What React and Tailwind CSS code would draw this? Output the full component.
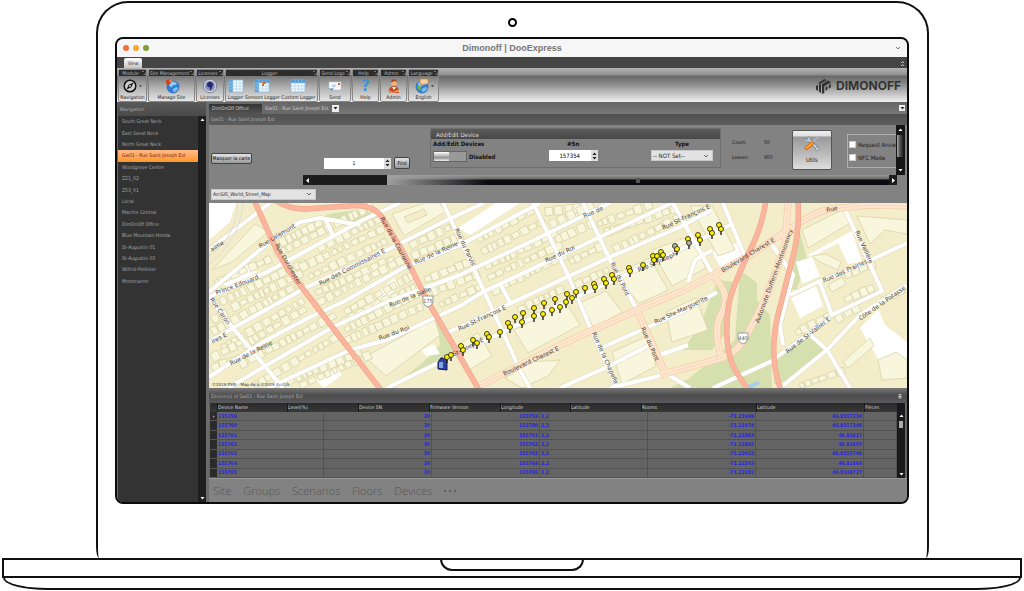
import { clsx } from "clsx";

const SITES = [
  "South Great Neck",
  "East Great Neck",
  "North Great Neck",
  "Gw01 - Rue Saint Joseph Est",
  "Woodgrove Centre",
  "Z21_02",
  "Z53_01",
  "Local",
  "Marche Central",
  "DimOnOff Office",
  "Blue Mountain Honda",
  "St-Augustin 01",
  "St-Augustin 03",
  "Wilfrid-Pelletier",
  "Montmartre",
];

const DEVICES = [
  ["155759", "-71.21999", "46.8157234"],
  ["155760", "-71.21974", "46.8157348"],
  ["155761", "-71.21863", "46.81617"],
  ["155762", "-71.21892", "46.81607"],
  ["155763", "-71.22022", "46.8155746"],
  ["155764", "-71.22243", "46.81464"],
  ["155765", "-71.22282", "46.8148727"],
];

const Arrow = ({ dir = "down", className = "fill-white" }) => {
  const shapes = {
    up: "M0.5 4L2.5 1.5L4.5 4Z",
    down: "M0.5 1L2.5 3.5L4.5 1Z",
    left: "M4 0L1 2.5L4 5Z",
    right: "M1 0L4 2.5L1 5Z",
  };
  return (
    <svg viewBox="0 0 5 5" className={clsx("size-[5px] shrink-0", className)}>
      <path d={shapes[dir]} />
    </svg>
  );
};

const Chevron = () => (
  <svg
    viewBox="0 0 6 6"
    className="pointer-events-none absolute top-1/2 right-1 size-[6px] -translate-y-1/2 fill-none stroke-[#666]"
  >
    <path d="M1 2L3 4L5 2" />
  </svg>
);

/* ---------- ribbon icons ---------- */

const CompassIcon = () => (
  <svg viewBox="0 0 22 16" className="h-4 w-[22px]">
    <circle cx="9" cy="8" r="5.8" fill="#ccc" stroke="#111" strokeWidth="1.5" />
    <path d="M12.5 4.5L10.3 9.3L5.5 11.5L7.7 6.7Z" fill="#111" />
    <circle cx="9" cy="8" r="1" fill="#ccc" />
    <path d="M18 7.5h3l-1.5 1.5z" fill="#222" />
  </svg>
);

const GlobeShape = () => (
  <>
    <circle cx="9" cy="9" r="6" fill="#2f7fd8" stroke="#1c58a8" strokeWidth=".6" />
    <path d="M5 5C8 2 12 4 13 6C11 8 9 6 8 9C6 10 5 7 5 5Z" fill="#8cc9f5" />
    <path d="M9 11C11 9 14 9 14.5 10C13 13 11 14.5 9 14Z" fill="#7dbcf0" />
  </>
);

const ManageSiteIcon = () => (
  <svg viewBox="0 0 16 16" className="size-4">
    <GlobeShape />
    <path d="M2 2L6 1.5L7.5 4L5 7L2.5 6Z" fill="#c8421c" />
    <path d="M4.5 3L7 2L8 4.5Z" fill="#f09a50" />
  </svg>
);

const LicensesIcon = () => (
  <svg viewBox="0 0 16 16" className="size-4">
    <circle cx="8" cy="8" r="6.8" fill="#c9ccda" stroke="#6f7794" strokeWidth=".8" />
    <circle cx="8" cy="8" r="5" fill="#8790bd" />
    <path d="M5 7C5 4 8 3 10 4.5C12 6 11 8 10 9C10 11 9 12 8 12L7.5 9L5.5 9Z" fill="#252a6e" />
  </svg>
);

const TableIcon = ({ accent }) => (
  <svg viewBox="0 0 16 14" className="h-[14px] w-4">
    <rect x="1" y="1" width="14" height="12" fill="#f4f9fd" stroke="#86b6dc" strokeWidth=".7" />
    {accent !== "top" && <rect x="1" y="1" width="4" height="12" fill="#5fa8de" />}
    {accent !== "side" && <rect x="1" y="1" width="14" height="3" fill="#4e9ad6" />}
    <path d="M1 4h14M1 7h14M1 10h14M5 1v12M8.500 1v12M12 1v12" stroke="#a7cde9" strokeWidth=".6" />
    {accent === "sensor" && <path d="M8.5 3h3v2H10v2H8z" fill="#e8641c" />}
  </svg>
);

const SendIcon = () => (
  <svg viewBox="0 0 16 14" className="h-[14px] w-4">
    <rect x="2" y="3" width="12" height="8" fill="#fbfbfb" stroke="#b8bcc4" strokeWidth=".6" />
    <rect x="11" y="4" width="2" height="2" fill="#e2552c" />
    <path d="M5 6h4M5 7.5h3" stroke="#7da0c8" strokeWidth=".7" />
    <path d="M1 9.500h6l-2 2z" fill="#3f8edb" />
  </svg>
);

const AdminIcon = () => (
  <svg viewBox="0 0 16 16" className="size-4">
    <path d="M3 15C2 10 5 8 8 8C11 8 13 10 13 15Z" fill="#c04a24" />
    <path d="M6 9L8 12L10 9Z" fill="#fff" />
    <circle cx="8" cy="5" r="3" fill="#f2b27c" />
    <path d="M5 4.5C5 0 11 0 11 4.5L9 3Z" fill="#a8441c" />
    <path d="M2 12L7 14L14 11L13 14L4 15Z" fill="#e8a070" />
  </svg>
);

const LanguageIcon = () => (
  <svg viewBox="0 0 22 16" className="h-4 w-[22px]">
    <GlobeShape />
    <path d="M4 8C7 7 9 9 8 12C6 13 4 11 4 8Z" fill="#5cb648" />
    <path d="M7 1h8v5h-4l-2 2v-2H7z" fill="#f6d2a0" stroke="#c87830" strokeWidth=".7" />
    <path d="M18 7.5h3l-1.5 1.5z" fill="#222" />
  </svg>
);

const UtilsIcon = () => (
  <svg viewBox="0 0 18 16" className="h-4 w-[18px]">
    <path d="M5 4L14 13" stroke="#6f7f90" strokeWidth="3" strokeLinecap="round" />
    <path d="M5 4L14 13" stroke="#dfe7ee" strokeWidth="1.6" strokeLinecap="round" />
    <path d="M2 3.5L4.5 5L5.5 1.5C8 2 8 6 5 7C3 7 2 5 2 3.5Z" fill="#c8d4df" stroke="#6f7f90" strokeWidth=".6" />
    <path d="M16 14L14 11.5L12 14.5C13.5 16 16 16 16 14Z" fill="#c8d4df" stroke="#6f7f90" strokeWidth=".6" />
    <path d="M9 8L14 3L16 1.5" stroke="#a5b4c2" strokeWidth="1.8" fill="none" />
    <path d="M3.5 13L9 8.5" stroke="#c05a10" strokeWidth="4" strokeLinecap="round" />
    <path d="M3.5 13L9 8.5" stroke="#ff9c30" strokeWidth="2.6" strokeLinecap="round" />
  </svg>
);

const RIBBON = [
  { title: "Module", width: "w-[29px]", items: [["Navigation", <CompassIcon />]] },
  { title: "Site Management", width: "w-[47px]", items: [["Manage Site", <ManageSiteIcon />]] },
  { title: "Licenses", width: "w-[28px]", items: [["Licenses", <LicensesIcon />]] },
  {
    title: "Logger",
    width: "w-[93px]",
    items: [
      ["Logger", <TableIcon accent="side" />],
      ["Sensors Logger", <TableIcon accent="sensor" />],
      ["Custom Logger", <TableIcon accent="top" />],
    ],
  },
  { title: "Send Logs", width: "w-[32px]", items: [["Send", <SendIcon />]] },
  {
    title: "Help",
    width: "w-[27px]",
    items: [["Help", <span className="text-[16px] leading-4 font-bold text-[#3f92d8]">?</span>]],
  },
  { title: "Admin", width: "w-[27px]", items: [["Admin", <AdminIcon />]] },
  { title: "Language", width: "w-[31px]", items: [["English", <LanguageIcon />]] },
];

const Ribbon = () => (
  <div className="flex h-[34px] items-start justify-between bg-[linear-gradient(#b4b4b4_0px,#8e8e8e_7px,#666_8px,#8a8a8a_16px,#ececec_33px)] pl-px">
    <div className="flex gap-px pt-px">
      {RIBBON.map((group) => (
        <section
          key={group.title}
          className={clsx(
            "flex h-[33px] shrink-0 flex-col rounded-[2px] border border-[#888] bg-[linear-gradient(#777_6px,#aaa_16px,#e6e6e6)]",
            group.width,
          )}
        >
          <h2 className="flex h-[6px] items-center justify-between overflow-hidden bg-[#2c2c2c] leading-[6px] whitespace-nowrap text-[#b8b8b8]">
            <span className="flex-1 text-center">{group.title}</span>
            <svg viewBox="0 0 4 4" className="size-1 shrink-0 fill-none stroke-[#aaa] stroke-[0.6]">
              <path d="M0 .5h2M3.500 1.500v2h-2" />
            </svg>
          </h2>
          <div className="flex flex-1 justify-evenly">
            {group.items.map(([label, icon]) => (
              <button
                key={label}
                type="button"
                className="flex flex-col items-center justify-between whitespace-nowrap text-[#1c1c1c]"
              >
                <span className="flex h-[18px] items-center pt-px">{icon}</span>
                <span className="h-[7px]">{label}</span>
              </button>
            ))}
          </div>
        </section>
      ))}
    </div>
    <div className="flex items-center gap-[5px] pt-[10px] pr-[6px] text-[#333]">
      <svg viewBox="0 0 15 16" className="h-4 w-[15px] fill-[#333]">
        <path d="M0 8L2 6.8V13L0 11.5Z" />
        <path d="M3 6.5L5 5.5V15L3 13.8Z" />
        <path d="M2 5L8.500 1L10.500 2.200L4 6Z" />
        <path d="M6 6L12 2.500L14.500 4V5.500L13 5.500L8.300 8.200V15L6 16Z" />
        <path d="M9.500 9.200L11.500 8V11.500L9.500 12.700Z" />
        <path d="M12.800 7L14.800 6V9.500L12.800 10.800Z" />
      </svg>
      <span className="font-[Inter,sans-serif] text-[12px] leading-4 font-bold">DIMONOFF</span>
    </div>
  </div>
);

const Sidebar = () => (
  <aside className="flex w-[92px] shrink-0 flex-col border-l border-[#666] bg-[#6c6c6c] pr-[3px]">
    <h2 className="flex h-[14px] items-center bg-gradient-to-b from-[#5a5a5a] to-[#4a4a4a] pl-[2px] text-[#aaa]">
      Navigation
    </h2>
    <div className="flex flex-1 bg-[#333]">
      <ul className="flex h-[171px] flex-1 flex-col">
        {SITES.map((site, i) => (
          <li key={site} className="flex flex-1">
            <a
              href="#site"
              className={clsx(
                "flex flex-1 items-center pl-1 whitespace-nowrap",
                i === 3
                  ? "bg-gradient-to-b from-[#ffb98a] to-[#ff9718] text-[#7c1c08]"
                  : "text-[#a4a4a4]",
              )}
            >
              {site}
            </a>
          </li>
        ))}
      </ul>
      <div className="flex w-2 flex-col items-center justify-between bg-[#1e1e1e] py-px">
        <Arrow dir="up" />
        <Arrow />
      </div>
    </div>
  </aside>
);

/* ---------- map ---------- */

const STREETS = [
  "M209 292L272 240L300 222L320 218L360 225",
  "M209 297L267 272L313 247L363 220L400 203",
  "M209 342L233 328L307 287L387 250L447 220L484 203",
  "M209 377L263 342L310 317L343 302L403 268L460 245L540 203",
  "M228 388L267 365L333 327L387 302L460 275L530 242L610 203",
  "M268 388L350 350L387 340L460 306L483 292L600 237L672 203",
  "M447 333L507 305L610 257L680 227L712 210",
  "M387 388L440 362L507 330L577 297L673 253L732 224",
  "M209 298L233 328L283 388",
  "M209 250L240 226L270 203",
  "M443 203L473 267L520 370L530 388",
  "M533 203L567 273L590 327L617 388",
  "M583 203L610 260L637 310",
  "M673 203L712 273",
  "M723 203L745 257",
  "M603 347L680 313L717 292",
  "M560 388L607 367L650 345",
  "M610 388L667 374L690 388",
  "M325 218L334 238",
  "M500 284L511 304",
  "M688 282L695 260L712 250",
  "M790 295L820 281L860 265L907 243",
  "M843 205L882 291L832 315L820 283",
  "M713 388L770 362L830 318",
  "M780 388L827 350L860 315L907 285",
  "M807 332L827 350L850 388",
  "M770 242L793 275L780 325L783 345",
  "M660 355L688 345",
];

const PARKS = [
  "M740 270L757 283V300L770 315L772 388H670L690 378L735 340Z",
  "M718 280L735 282L728 330L712 350H683L700 325Z",
  "M798 225L808 262L796 290L788 288Z",
  "M806 336L826 348L790 380L774 384L776 356Z",
  "M320 218Q340 208 374 213L352 222Z",
  "M436 318L450 345L462 352L395 384L420 365L440 345Z",
];

const LOTS = [
  "M209 203H236L230 222L209 240Z",
  "M222 285L248 264L258 272L230 286Z",
  "M458 228L496 203H520L470 235Z",
  "M378 292L394 278L398 285L386 302L380 300Z",
  "M362 308L372 300L378 306L366 313Z",
  "M712 252L740 242L744 262L722 270Z",
  "M808 255L852 231L862 262L848 264L838 243L812 257Z",
  "M796 262L812 257L820 276L802 284Z",
  "M791 298L816 286L823 306L800 318Z",
  "M860 328L878 309L885 325L907 342V358L880 362L868 342Z",
  "M316 380L338 368L342 375L324 388Z",
  "M422 350L434 344L440 354L426 356Z",
];

const BIG_BUILDINGS = [
  "M212 270L255 224L268 232L232 262Z",
  "M392 214L425 203H440L445 212L404 236Z",
  "M365 357L412 331L434 318L440 335L386 376Z",
  "M452 348L478 333L492 356L466 372Z",
  "M514 330L566 303L580 325L528 353Z",
  "M580 303L606 291L622 312L594 328Z",
  "M612 275L650 258L668 290L640 303Z",
  "M652 250L690 236L706 268L672 286Z",
  "M612 352L648 336L656 366L622 384Z",
  "M666 312L696 298L708 330L672 342Z",
  "M802 230L842 210L852 222L808 248Z",
  "M857 216L907 220V234L885 230L870 244Z",
  "M812 256L826 254L841 262L838 270L820 262Z",
  "M843 362L870 338L874 346L848 368Z",
  "M878 360L896 352L907 360V378L882 380Z",
  "M828 285L842 277L846 284L832 292Z",
  "M505 378L532 362L560 360L548 376L522 388Z",
  "M690 206L712 206L735 250L718 256Z",
];

// lines along which rows of houses are laid: x1, y1, x2, y2
const HOUSE_ROWS = [
  [215, 283, 268, 260],
  [275, 255, 372, 206],
  [280, 243, 318, 224],
  [212, 306, 305, 262],
  [232, 308, 300, 274],
  [300, 268, 385, 228],
  [318, 249, 378, 220],
  [212, 320, 226, 313],
  [212, 332, 300, 284],
  [309, 277, 382, 243],
  [222, 348, 304, 300],
  [242, 346, 302, 311],
  [316, 293, 395, 258],
  [318, 303, 402, 260],
  [212, 358, 240, 343],
  [212, 368, 262, 350],
  [240, 365, 332, 317],
  [345, 312, 410, 277],
  [342, 321, 412, 288],
  [250, 388, 335, 338],
  [345, 330, 420, 292],
  [345, 341, 425, 305],
  [280, 385, 355, 355],
  [300, 386, 365, 357],
  [410, 246, 452, 226],
  [412, 256, 462, 236],
  [425, 280, 470, 262],
  [432, 292, 480, 274],
  [440, 305, 482, 286],
  [478, 240, 530, 212],
  [482, 252, 542, 222],
  [485, 267, 552, 236],
  [488, 278, 558, 246],
  [492, 292, 560, 258],
  [545, 212, 578, 208],
  [550, 225, 590, 206],
  [556, 240, 595, 222],
  [570, 262, 600, 247],
  [598, 224, 650, 205],
  [605, 233, 672, 210],
  [614, 250, 680, 217],
  [518, 310, 560, 290],
  [575, 285, 606, 271],
  [845, 300, 875, 287],
  [836, 320, 858, 308],
  [845, 275, 872, 265],
  [796, 333, 825, 318],
  [800, 386, 840, 372],
  [882, 300, 905, 290],
];

const houses = HOUSE_ROWS.flatMap(([x1, y1, x2, y2], row) => {
  const length = Math.hypot(x2 - x1, y2 - y1);
  const angle = (Math.atan2(y2 - y1, x2 - x1) * 180) / Math.PI;
  const list = [];
  let at = 0;
  for (let i = 0; at < length; i++) {
    const r = Math.abs(Math.sin(row * 12.9 + i * 78.2));
    const w = 4 + r * 4;
    const h = 5 + ((r * 37) % 1) * 4;
    list.push({
      x: x1 + ((x2 - x1) * at) / length,
      y: y1 + ((y2 - y1) * at) / length,
      w,
      h,
      angle,
    });
    at += w + ((r * 91) % 1) * 3;
  }
  return list;
});

const PEACH = [
  "M477 387L560 345L637 310L680 292L713 275L750 255L793 227Q810 214 830 209L870 205L907 206",
  "M788 203L785 245L767 295L747 335Q738 352 722 358L660 375",
  "M713 275Q732 296 722 312Q712 330 722 358",
  "M637 310L667 377",
];

const SALMON = [
  "M254 200L272 240Q284 266 300 285L333 328L381 390",
  "M275 200Q288 209 306 209L347 206Q374 203 383 219L403 252L427 300L458 353L479 390",
  "M766 200Q763 222 754 242Q735 280 729 302Q722 350 737 373L748 390",
  "M798 200Q800 232 792 260L778 315Q768 356 781 390",
];

// text, centre x, centre y, rotation
const STREET_NAMES = [
  ["Rue Lalemont", 277, 236, -31],
  ["Rue Dorchester", 288, 264, 60],
  ["aime", 217, 246, -33],
  ["ires E", 219, 338, -27],
  ["Prince Edouard", 237, 285, -21],
  ["Rue Caron", 220, 311, 55],
  ["Rue des Commissaires E", 352, 267, -27],
  ["Rue de la Couronne", 396, 243, 61],
  ["Rue de la Reine", 436, 253, -24],
  ["Rue de la Reine", 251, 353, -27],
  ["Rue de la Salle", 410, 297, -22],
  ["Rue du Roi", 394, 333, -20],
  ["Rue du Parvis", 465, 247, 65],
  ["Rue du Roi", 560, 254, -25],
  ["Rue St-François E", 482, 318, -25],
  ["Rue St-François E", 686, 217, -25],
  ["Rue St-Joseph E", 462, 350, -26],
  ["Rue St-Joseph", 657, 262, -24],
  ["Boulevard Charest E", 531, 361, -25],
  ["Boulevard Charest E", 748, 255, -31],
  ["Rue du Pont", 620, 279, 64],
  ["Rue du Pont", 650, 344, 66],
  ["Rue de la Chapelle", 605, 358, 66],
  ["Rue Ste-Marguerite", 681, 310, -25],
  ["Autoroute Dufferin-Montmorency", 774, 276, -70],
  ["Rue Vallière", 864, 247, 66],
  ["Rue des Prairies", 845, 271, -24],
  ["Rue de St-Vallier E", 808, 335, -38],
  ["Côte de la Potasse", 882, 303, -35],
  ["Rue de", 593, 212, -24],
  ["Rue", 832, 209, -12],
];

const PINS = [
  [447, 357], [451, 355], [461, 346], [463, 350], [473, 340], [477, 343], [487, 334],
  [489, 337], [500, 332], [508, 323], [510, 327], [515, 317], [523, 313], [522, 322],
  [534, 308], [534, 316], [544, 303], [543, 314], [555, 299], [552, 310], [560, 307],
  [567, 294], [566, 302], [572, 298], [576, 292], [585, 288], [594, 284], [595, 287],
  [604, 279], [606, 283], [612, 275], [614, 279], [629, 268], [630, 271], [643, 265],
  [653, 256], [654, 260], [657, 256], [661, 252], [663, 255], [675, 246, "off"], [677, 249],
  [688, 239], [689, 243, "off"], [698, 235], [700, 240], [710, 229], [712, 233],
  [719, 225], [721, 229],
];

const Shield = ({ x, y, label }) => (
  <g transform={`translate(${x} ${y})`}>
    <path d="M-5 -5H5V1Q4 5 0 6Q-4 5 -5 1Z" fill="#fff" stroke="#999" />
    <text y="2" textAnchor="middle" fontSize="5" fill="#555">
      {label}
    </text>
  </g>
);

const StreetMap = () => (
  <svg
    viewBox="209 203 698 185"
    preserveAspectRatio="xMidYMid slice"
    className="block h-[185px] w-full bg-[#f3edc9] font-['DejaVu_Sans',sans-serif]"
    role="img"
    aria-label="Street map with device pins"
  >
    <g fill="#d6dfae">
      {PARKS.map((d) => <path key={d} d={d} />)}
    </g>
    <path d="M748 385L758 381L760 384L752 388H747Z" fill="#a9cdf0" />
    <g fill="#fff">
      {LOTS.map((d) => <path key={d} d={d} />)}
    </g>
    <g fill="#f8f7de" stroke="#d6cfa4" strokeWidth=".7">
      {BIG_BUILDINGS.map((d) => <path key={d} d={d} />)}
      {houses.map((b, i) => (
        <rect
          key={i}
          x={b.x}
          y={b.y - b.h / 2}
          width={b.w}
          height={b.h}
          transform={`rotate(${b.angle} ${b.x} ${b.y})`}
        />
      ))}
      <path d="M404 217L424 209L427 215L408 223Z" fill="#f3edc9" />
    </g>
    <g fill="none" strokeLinejoin="round">
      {STREETS.map((d) => <path key={d} d={d} stroke="#ded9c0" strokeWidth="5" />)}
      {STREETS.map((d) => <path key={d} d={d} stroke="#fff" strokeWidth="4" />)}
      <path d="M209 264Q240 240 243 203M209 256Q236 238 238 203" stroke="#ddd" />
      {PEACH.map((d) => <path key={d} d={d} stroke="#f7cda8" strokeWidth="7" />)}
      {PEACH.map((d) => <path key={d} d={d} stroke="#fde6cf" strokeWidth="5.5" />)}
      {PEACH.map((d) => <path key={d} d={d} stroke="#f9d3b2" strokeWidth=".7" />)}
      {SALMON.map((d) => <path key={d} d={d} stroke="#eea088" strokeWidth="5.5" />)}
      {SALMON.map((d) => <path key={d} d={d} stroke="#fbb59d" strokeWidth="4.5" />)}
    </g>
    <g fill="#444" fontSize="6" textAnchor="middle">
      {STREET_NAMES.map(([name, x, y, angle]) => (
        <text key={`${name}${x}`} x={x} y={y + 2} transform={`rotate(${angle} ${x} ${y})`}>
          {name}
        </text>
      ))}
    </g>
    <Shield x={428} y={301} label="175" />
    <Shield x={743} y={338} label="440" />
    <g>
      <path d="M438 362L441 358L447 360L447 370L438 369Z" fill="#2c3fa8" stroke="#161c50" />
      <path d="M439 362h4v6h-4z" fill="#7fa8dc" />
    </g>
    {PINS.map(([x, y, state]) => (
      <g key={`${x}-${y}`}>
        <path d={`M${x} ${y}v6`} stroke="#222" strokeWidth="1.4" />
        <circle
          cx={x}
          cy={y}
          r="2.5"
          fill={state ? "#b4b4b4" : "#fff200"}
          stroke="#2a2a10"
          strokeWidth=".9"
        />
      </g>
    ))}
    <text x="212" y="386" fontSize="4" fill="#234">
      ©2019 ESRI - Map data ©2019 <tspan fill="#1a5fc0">ArcGIS</tspan>
    </text>
  </svg>
);

/* ---------- device controls ---------- */

const Spinner = ({ label, value, className }) => (
  <div className={clsx("flex h-[11px] bg-white", className)}>
    <input
      aria-label={label}
      defaultValue={value}
      className="w-full min-w-0 flex-1 bg-white text-center text-black outline-none"
    />
    <div className="flex w-[7px] flex-col items-center justify-center bg-[#ddd]">
      <Arrow dir="up" className="fill-[#222]" />
      <Arrow className="fill-[#222]" />
    </div>
  </div>
);

const Picker = ({ label, value, className }) => (
  <div className={clsx("relative", className)}>
    <select
      aria-label={label}
      className="block h-[11px] w-full appearance-none border border-[#c8c8c8] bg-[#e2e2e2] pl-px text-[#222]"
    >
      <option>{value}</option>
    </select>
    <Chevron />
  </div>
);

const smallButton =
  "flex items-center justify-center rounded-[2px] border border-[#444] bg-gradient-to-b from-[#e4e4e4] to-[#999] whitespace-nowrap text-black";

const DeviceControls = () => (
  <div className="h-[60px] bg-[#828282]">
    <div className="flex h-[50px]">
      <div className="flex min-w-0 flex-1 items-start overflow-hidden pl-[2px]">
        <button type="button" className={clsx(smallButton, "mt-7 h-[11px] w-[41px] shrink-0")}>
          Masquer la carte
        </button>
        <div className="ml-[72px] flex shrink-0 items-center gap-[3px] pt-8">
          <Spinner label="Device number" value="1" className="w-[67px]" />
          <button type="button" className={clsx(smallButton, "h-[12px] w-4")}>
            Find
          </button>
        </div>
        <fieldset className="mt-[3px] ml-5 h-10 min-w-0 flex-1 rounded-[2px] border border-[#6e6e6e]">
          <div className="flex h-[10px] items-center bg-gradient-to-b from-[#5c5c5c] to-[#484848] pl-[5px] text-[6px] text-[#ddd]">
            Add/Edit Device
          </div>
          <div className="flex justify-between pr-[7px] pl-[2px] text-[6px] text-[#111]">
            <div>
              <div className="h-3 pt-px font-bold">Add/Edit Devices</div>
              <div className="flex items-center gap-[2px] font-bold">
                <button
                  type="button"
                  role="switch"
                  aria-checked="false"
                  aria-label="Add/Edit Devices"
                  className="flex h-[11px] w-[34px] border border-[#666] bg-[#999]"
                >
                  <span className="h-full w-[15px] bg-[linear-gradient(#fff,#aaa_50%,#777_50%,#eee)]" />
                </button>
                Disabled
              </div>
            </div>
            <div className="flex flex-col items-center">
              <div className="h-[11px] pt-px font-bold">#Sn</div>
              <Spinner label="Serial number" value="157354" className="w-[49px]" />
            </div>
            <div className="flex flex-col items-center">
              <div className="h-[11px] pt-px font-bold">Type</div>
              <Picker label="Type" value="-- NOT Set--" className="w-[62px]" />
            </div>
          </div>
        </fieldset>
        <dl className="ml-[11px] grid shrink-0 grid-cols-[32px_28px] gap-y-2 pt-[14px] leading-[7px] text-[#1c1c1c]">
          <dt>Count:</dt>
          <dd>50</dd>
          <dt>Leaves:</dt>
          <dd>950</dd>
        </dl>
        <button
          type="button"
          className="mt-[5px] flex h-10 w-10 shrink-0 flex-col items-center justify-between rounded-[2px] border border-[#555] bg-[linear-gradient(#f0f0f0,#ddd_5px,#999_6px,#b4b4b4_20px,#ddd)] pt-1 pb-[6px] text-[6px] text-[#222]"
        >
          <UtilsIcon />
          Utils
        </button>
        <div className="mt-[9px] ml-[15px] flex h-[34px] w-[49px] shrink-0 flex-col justify-evenly overflow-hidden border border-r-0 border-[#b0b0b0] pl-px text-[6px] whitespace-nowrap text-[#1c1c1c]">
          <label className="flex items-center gap-[2px]">
            <input type="checkbox" className="size-[7px] shrink-0 appearance-none border border-[#ccc] bg-white" />
            Request Answ
          </label>
          <label className="flex items-center gap-[2px]">
            <input type="checkbox" className="size-[7px] shrink-0 appearance-none border border-[#ccc] bg-white" />
            NFC Mode
          </label>
        </div>
      </div>
      <div className="mr-[2px] flex w-[9px] flex-col items-center bg-[#161616] py-[2px]">
        <Arrow dir="up" />
        <div className="mt-[3px] h-[22px] w-[7px] bg-[linear-gradient(90deg,#aaa,#555_40%,#111)]" />
        <div className="flex-1" />
        <Arrow />
      </div>
    </div>
    <div className="mr-[10px] ml-[94px] flex h-[10px] items-center bg-[#1c1c1c]">
      <span className="flex w-[84px] pl-[2px]">
        <Arrow dir="left" />
      </span>
      <div className="flex h-full flex-1 items-center justify-center bg-[linear-gradient(90deg,#a0a0a0,transparent_20%),linear-gradient(#999,#666_4px,#0c0c10_5px,#0c0c10)]">
        <span className="h-[5px] w-1 bg-[#555]" />
      </div>
      <span className="flex w-2 justify-center">
        <Arrow dir="right" />
      </span>
    </div>
  </div>
);

/* ---------- device table ---------- */

const HEADERS = [
  ["Device Name", 1],
  ["Level(%)", 2],
  ["Device SN", 1],
  ["Firmware Version", 2],
  ["Longitude", 2],
  ["Latitude", 1],
  ["Rooms", 2],
  ["Latitude", 1],
  ["Pièces", 1],
];

const cell = "border-r border-b border-[#525252] px-px";

const DeviceTable = () => (
  <div className="flex h-[76px] border-b border-[#999] bg-[#646464] pr-[2px] pl-px">
    <table className="h-[75px] flex-1 table-fixed border-separate border-spacing-0 leading-[7px] whitespace-nowrap">
      <colgroup>
        <col className="w-[7px]" />
        <col className="w-[70px]" />
        <col className="w-[37px]" />
        <col className="w-[34px]" />
        <col className="w-[71px]" />
        <col className="w-[3px]" />
        <col className="w-[68px]" />
        <col className="w-[40px]" />
        <col className="w-[30px]" />
        <col className="w-[71px]" />
        <col className="w-[7px]" />
        <col className="w-[108px]" />
        <col className="w-[108px]" />
        <col />
      </colgroup>
      <thead>
        <tr className="h-[9px] bg-gradient-to-b from-[#2a2a2a] to-[#383838] text-left text-[#d0d0d0]">
          <th className="p-0" aria-label="Selected" />
          {HEADERS.map(([title, span], i) => (
            <th key={i} colSpan={span} className="border-l border-[#181818] p-0 font-normal">
              {title}
            </th>
          ))}
        </tr>
      </thead>
      <tbody className="font-bold text-[#2424e0]">
        {DEVICES.map(([sn, lng, lat], i) => (
          <tr key={sn}>
            <td className="border-b border-[#555] bg-[#2a2a2a] p-0 text-center text-white">
              {i === 0 ? "›" : ""}
            </td>
            <td colSpan={2} className={cell}>{sn}</td>
            <td colSpan={3} className={clsx(cell, "text-right")}>30</td>
            <td colSpan={2} className={clsx(cell, "text-right")}>{sn}</td>
            <td colSpan={3} className={cell}>2,2</td>
            <td className={clsx(cell, "text-right")}>{lng}</td>
            <td className={clsx(cell, "text-right")}>{lat}</td>
            <td className={cell} />
          </tr>
        ))}
      </tbody>
    </table>
    <div className="flex w-2 flex-col items-center bg-[#1a1a1a] pt-[10px] pb-px">
      <Arrow dir="up" />
      <div className="mt-[3px] h-[7px] w-1 bg-[#aaa]" />
      <div className="flex-1" />
      <Arrow />
    </div>
  </div>
);

const Workspace = () => (
  <main className="flex min-w-0 flex-1 flex-col bg-[#828282]">
    <div className="flex h-3 items-center justify-between bg-gradient-to-b from-[#666] to-[#787878] pr-[2px]">
      <div className="flex h-full items-center pt-px">
        <button
          type="button"
          className="h-[10px] w-[53px] bg-gradient-to-b from-[#333] to-[#555] pl-[3px] text-left text-[#ccc]"
        >
          DimOnOff Office
        </button>
        <button type="button" className="h-[10px] bg-[#6a6a6a] px-[3px] whitespace-nowrap text-[#ccc]">
          Gw01 - Rue Saint Joseph Est
        </button>
        <button
          type="button"
          aria-label="Tab list"
          className="flex size-[7px] items-center justify-center bg-[#eee]"
        >
          <Arrow className="fill-[#222]" />
        </button>
      </div>
      <button
        type="button"
        aria-label="Window menu"
        className="flex h-[6px] w-[6px] items-center justify-center bg-[#eee]"
      >
        <Arrow className="fill-[#222]" />
      </button>
    </div>
    <h2 className="flex h-[11px] items-center bg-gradient-to-b from-[#515151] to-[#5c5c5c] pl-[2px] text-[#aaa]">
      Gw01 - Rue Saint Joseph Est
    </h2>
    <DeviceControls />
    <div className="flex h-[18px] items-center pl-[2px]">
      <Picker label="Map source" value="ArcGIS_World_Street_Map" className="w-[105px]" />
    </div>
    <StreetMap />
    <h2 className="flex h-[15px] items-center justify-between bg-gradient-to-b from-[#777] via-[#4c4c4c] to-[#5a5a5e] pt-px pr-[5px] pl-[2px] text-[#aaa]">
      Device(s) of Gw01 - Rue Saint Joseph Est
      <svg viewBox="0 0 4 5" className="h-[5px] w-1 fill-none stroke-[#bbb]">
        <path d="M1 .5h2v2H1zM0 3h4M2 3v2" />
      </svg>
    </h2>
    <DeviceTable />
    <nav className="flex h-[23px] items-center gap-3 pl-1 font-['Open_Sans',sans-serif] text-[11px] font-light text-[#555]">
      <a href="#site">Site</a>
      <a href="#groups">Groups</a>
      <a href="#scenarios">Scenarios</a>
      <a href="#floors">Floors</a>
      <a href="#devices">Devices</a>
      <button type="button" aria-label="More" className="flex gap-[3px]">
        <span className="size-[2px] rounded-full bg-[#555]" />
        <span className="size-[2px] rounded-full bg-[#555]" />
        <span className="size-[2px] rounded-full bg-[#555]" />
      </button>
    </nav>
  </main>
);

const Screen = () => (
  <div className="overflow-hidden rounded-[8px] border-2 border-[#0c0c0e] bg-[#828282] font-['DejaVu_Sans_Condensed','DejaVu_Sans',sans-serif] text-[5px] leading-[7px]">
    <header className="flex h-[18px] items-center justify-between bg-[#f6f6f6] px-[6px] font-['Liberation_Sans',sans-serif]">
      <div className="flex w-10 gap-1">
        <span className="size-[6px] rounded-full bg-[#f0703a]" />
        <span className="size-[6px] rounded-full bg-[#f8a534]" />
        <span className="size-[6px] rounded-full bg-[#7f9f35]" />
      </div>
      <h1 className="text-[9px] leading-[14px] font-bold text-[#777]">Dimonoff | DooExpress</h1>
      <div className="flex w-10 justify-end">
        <svg viewBox="0 0 6 6" className="size-[6px] fill-none stroke-[#777]">
          <path d="M1 2L3 4L5 2" />
        </svg>
      </div>
    </header>
    <div className="flex h-[11px] items-end justify-between bg-[#454545] pr-[2px] pl-[7px]">
      <button
        type="button"
        className="h-[10px] w-[18px] rounded-t-[2px] bg-gradient-to-b from-white to-[#c4c4c4] text-center text-[#333]"
      >
        View
      </button>
      <svg viewBox="0 0 5 7" className="mb-px h-[7px] w-[5px] fill-none stroke-[#ccc]">
        <path d="M1 3L2.500 1.500L4 3M1 6L2.500 4.500L4 6" />
      </svg>
    </div>
    <Ribbon />
    <div className="flex">
      <Sidebar />
      <Workspace />
    </div>
  </div>
);

export default function App() {
  return (
    <div className="overflow-hidden bg-white pt-px">
      <div className="mr-[95px] ml-24 rounded-t-[32px] rounded-b-[3px_12px] border-2 border-b-0 border-[#111] bg-white pr-[18px] pb-[54px] pl-[17px]">
        <div className="flex h-[34px] items-center justify-center pt-[4px]">
          <span className="size-[9px] rounded-full border-2 border-black" />
        </div>
        <Screen />
      </div>
      <div className="mx-[2px] flex h-5 items-start justify-center border-2 border-[#111]">
        <div className="-mt-px h-3 w-36 rounded-b-[12px] border-2 border-t-0 border-[#111]" />
      </div>
      <div className="mx-[3px] h-3 rounded-b-[45px_12px] border-2 border-t-0 border-[#111]" />
    </div>
  );
}
